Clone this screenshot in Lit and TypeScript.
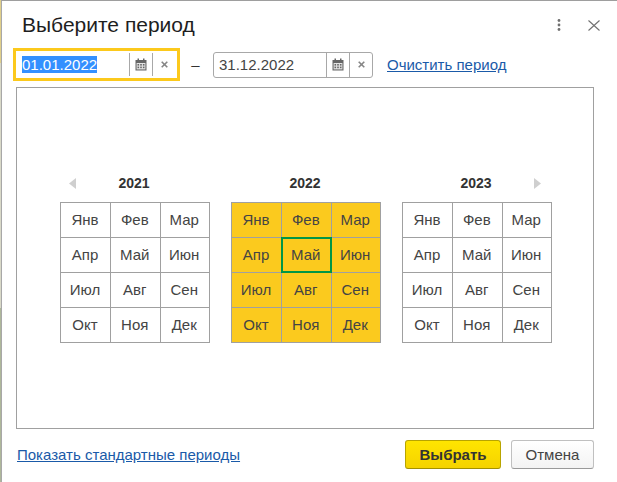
import { LitElement, html, css, svg } from "lit";
import { customElement } from "lit/decorators.js";
import { classMap } from "lit/directives/class-map.js";

const MONTHS = ["Янв", "Фев", "Мар", "Апр", "Май", "Июн", "Июл", "Авг", "Сен", "Окт", "Ноя", "Дек"];

const calendarIcon = svg`<svg class="cal" width="12" height="13" viewBox="0 0 12 13">
  <path fill="#666" d="M0.5 2h2V0.5h1.5V2h4V0.5h1.5V2h2v10.5h-11z"/>
  <rect x="1.6" y="5" width="8.8" height="6.4" fill="#e4e4e4"/>
  <g fill="#666">
    <rect x="2.5" y="6" width="1.6" height="1.6"/><rect x="5.2" y="6" width="1.6" height="1.6"/><rect x="7.9" y="6" width="1.6" height="1.6"/>
    <rect x="2.5" y="8.6" width="1.6" height="1.6"/><rect x="5.2" y="8.6" width="1.6" height="1.6"/><rect x="7.9" y="8.6" width="1.6" height="1.6"/>
  </g>
</svg>`;

const clearIcon = svg`<svg width="7" height="7" viewBox="0 0 7 7"><path d="M0.7 0.7l5.6 5.6M6.3 0.7l-5.6 5.6" stroke="#858585" stroke-width="1.6" fill="none"/></svg>`;

@customElement("app-root")
export class AppRoot extends LitElement {
  static styles = css`
    :host {
      display: block;
      width: 617px;
      height: 482px;
      overflow: hidden;
      font-family: "Liberation Sans", Arial, sans-serif;
      color: #333;
      background: linear-gradient(to bottom, #e0cf8a 0 13%, #d9d9c8 13% 64%, #aeb79a 64% 100%);
      box-sizing: border-box;
      padding-left: 1px;
    }
    * { box-sizing: border-box; }
    .dialog {
      height: 482px;
      background: #fff;
      border-top: 1px solid #9e9e9e;
      border-left: 1px solid #a8a8a8;
      display: flex;
      flex-direction: column;
    }
    .head {
      height: 47px;
      display: flex;
      align-items: center;
      padding: 1px 17px 0 20px;
    }
    .title { font-size: 21px; color: #1e1e1e; flex: 1; }
    .kebab { margin-right: 27px; display: block; }
    .close { display: block; }
    .dates {
      height: 33px;
      margin-left: 11px;
      display: flex;
      align-items: center;
    }
    .field {
      display: flex;
      align-items: center;
      width: 160px;
      height: 26px;
      border: 1px solid #a8a8a8;
      border-radius: 3px;
      font-size: 15px;
      color: #444;
    }
    .field.focus {
      width: 167px;
      height: 33px;
      border: 3px solid #fcc91c;
      border-radius: 0;
    }
    .val { flex: 1; padding-left: 5px; }
    .focus .val { padding-left: 6px; }
    .sel { background: #3390ff; color: #fff; }
    .btn {
      height: 100%;
      display: flex;
      align-items: center;
      justify-content: center;
      border-left: 1px solid #a8a8a8;
    }
    .btn.c { width: 23px; padding-right: 1px; }
    .btn.x { width: 23px; }
    .focus .btn { height: 23px; }
    .focus .btn.x { width: 25px; padding-right: 1px; }
    .dash { width: 33px; padding-right: 2px; text-align: center; font-size: 15px; color: #333; }
    .link { color: #1a5aa8; text-decoration: underline; font-size: 15px; }
    .dates .link { margin-left: 14px; }
    .panel {
      width: 578px;
      height: 342px;
      margin: 6px 0 0 14px;
      border: 1px solid #a0a0a0;
      display: flex;
      align-items: center;
      justify-content: center;
      gap: 21px;
      padding: 0 0 0 2px;
    }
    .year { width: 150px; }
    .yhead {
      height: 20px;
      margin-bottom: 9px;
      display: grid;
      grid-template-columns: 1fr auto 1fr;
      align-items: center;
      font-weight: bold;
      font-size: 14px;
      text-align: center;
      color: #333;
      padding-right: 2px;
    }
    .arrow { display: block; }
    .arrow.l { margin-left: 9px; }
    .arrow.r { justify-self: end; margin-right: 9px; }
    .grid {
      display: grid;
      grid-template-columns: 50px 49.5px 49.5px;
      grid-auto-rows: 35px;
      border-top: 1px solid #a0a0a0;
      border-left: 1px solid #a0a0a0;
      width: 150px;
    }
    .grid.on { background: #fbca1e; }
    .cell {
      position: relative;
      display: flex;
      align-items: center;
      justify-content: center;
      font-size: 15px;
      color: #444;
      padding: 0 1px 1px 0;
      border-right: 1px solid #a0a0a0;
      border-bottom: 1px solid #a0a0a0;
    }
    .cell.cur::after {
      content: "";
      position: absolute;
      inset: -1px -1px -1px -1px;
      border: 2px solid #009646;
    }
    .foot {
      display: flex;
      align-items: center;
      height: 29px;
      margin: 11px 23px 0 15px;
    }
    .foot .link { flex: 1; }
    .b {
      height: 29px;
      border-radius: 3px;
      font-size: 15px;
      display: flex;
      align-items: center;
      justify-content: center;
    }
    .ok {
      width: 96px;
      font-weight: bold;
      color: #333;
      background: linear-gradient(#ffe500, #f5d300);
      border: 1px solid #b8a400;
      border-bottom-color: #a39100;
      margin-right: 10px;
    }
    .cancel {
      width: 83px;
      color: #444;
      background: linear-gradient(#fff, #f3f3f3);
      border: 1px solid #c0c0c0;
      border-bottom-color: #999;
    }
  `;

  private year(y: number, arrow: string, on: boolean) {
    return html`<div class="year">
      <div class="yhead">
        <span>${arrow === "l"
          ? html`<svg class="arrow l" width="7" height="11" viewBox="0 0 7 11"><path d="M7 0v11L0 5.5z" fill="#cfcfcf"/></svg>`
          : ""}</span>
        <span>${y}</span>
        ${arrow === "r"
          ? html`<svg class="arrow r" width="7" height="11" viewBox="0 0 7 11"><path d="M0 0v11l7-5.5z" fill="#cfcfcf"/></svg>`
          : html`<span></span>`}
      </div>
      <div class=${classMap({ grid: true, on })}>
        ${MONTHS.map(
          (m) => html`<div class=${classMap({ cell: true, cur: on && m === "Май" })}>${m}</div>`
        )}
      </div>
    </div>`;
  }

  render() {
    return html`<div class="dialog">
      <div class="head">
        <div class="title">Выберите период</div>
        <svg class="kebab" width="4" height="12" viewBox="0 0 4 12" fill="#707070">
          <circle cx="2" cy="1.5" r="1.4"/><circle cx="2" cy="6" r="1.4"/><circle cx="2" cy="10.5" r="1.4"/>
        </svg>
        <svg class="close" width="12" height="11" viewBox="0 0 12 11"><path d="M0.5 0.5l11 10M11.5 0.5l-11 10" stroke="#707070" stroke-width="1.1" fill="none"/></svg>
      </div>
      <div class="dates">
        <div class="field focus">
          <div class="val"><span class="sel">01.01.2022</span></div>
          <div class="btn c">${calendarIcon}</div>
          <div class="btn x">${clearIcon}</div>
        </div>
        <div class="dash">–</div>
        <div class="field">
          <div class="val">31.12.2022</div>
          <div class="btn c">${calendarIcon}</div>
          <div class="btn x">${clearIcon}</div>
        </div>
        <a class="link">Очистить период</a>
      </div>
      <div class="panel">
        ${this.year(2021, "l", false)}
        ${this.year(2022, "", true)}
        ${this.year(2023, "r", false)}
      </div>
      <div class="foot">
        <a class="link">Показать стандартные периоды</a>
        <div class="b ok">Выбрать</div>
        <div class="b cancel">Отмена</div>
      </div>
    </div>`;
  }
}
